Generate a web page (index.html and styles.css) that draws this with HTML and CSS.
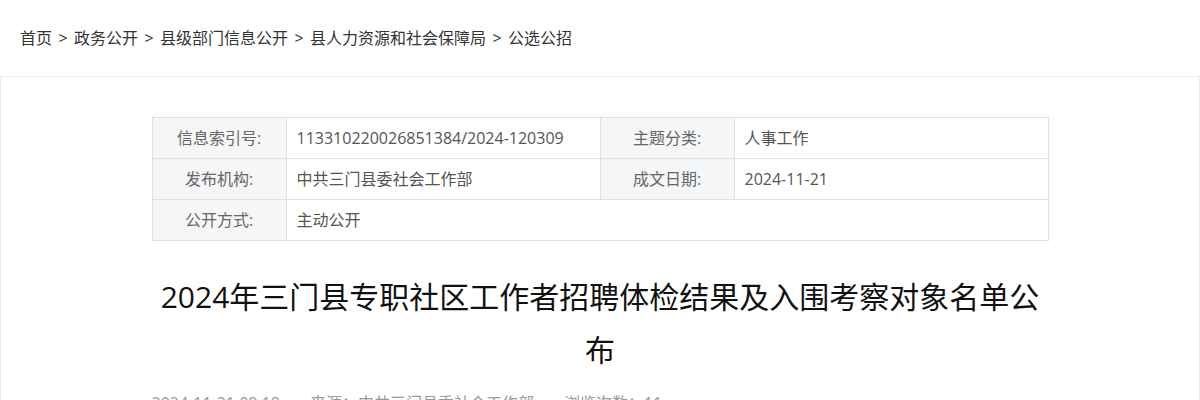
FILE: index.html
```html
<!DOCTYPE html>
<html lang="zh-CN">
<head>
<meta charset="utf-8">
<title>2024年三门县专职社区工作者招聘体检结果及入围考察对象名单公布</title>
<link rel="stylesheet" href="styles.css">
</head>
<body>
<div class="crumbs">
  <a href="#">首页</a><span class="sep">&gt;</span><a href="#">政务公开</a><span class="sep">&gt;</span><a href="#">县级部门信息公开</a><span class="sep">&gt;</span><a href="#">县人力资源和社会保障局</a><span class="sep">&gt;</span><a href="#">公选公招</a>
</div>
<div class="main">
  <table class="meta-table">
    <colgroup>
      <col class="c-label"><col class="c-value"><col class="c-label"><col class="c-value">
    </colgroup>
    <tr>
      <th>信息索引号:</th><td>113310220026851384/2024-120309</td>
      <th>主题分类:</th><td>人事工作</td>
    </tr>
    <tr>
      <th>发布机构:</th><td>中共三门县委社会工作部</td>
      <th>成文日期:</th><td>2024-11-21</td>
    </tr>
    <tr>
      <th>公开方式:</th><td colspan="3">主动公开</td>
    </tr>
  </table>
  <h1 class="title">2024年三门县专职社区工作者招聘体检结果及入围考察对象名单公布</h1>
  <div class="info">
    <span>2024-11-21 09:18</span><span>来源：中共三门县委社会工作部</span><span>浏览次数：11</span>
  </div>
</div>
</body>
</html>
```
FILE: styles.css
```css
html, body {
  margin: 0;
  padding: 0;
  background: #fff;
}
body {
  font-family: "Open Sans", "Noto Sans CJK SC", sans-serif;
  color: #333;
}
.crumbs {
  height: 76px;
  box-sizing: border-box;
  padding: 26px 20px;
  font-size: 16px;
  line-height: 24px;
  color: #333;
}
.crumbs a {
  color: #333;
  text-decoration: none;
}
.crumbs .sep {
  display: inline-block;
  width: 22px;
  text-align: center;
  color: #333;
}
.main {
  border: 1px solid #eeeeee;
  border-bottom: none;
  padding-top: 40px;
  min-height: 400px;
}
.meta-table {
  width: 897px;
  margin: 0 auto;
  border-collapse: collapse;
  table-layout: fixed;
  font-size: 16px;
}
.c-label { width: 134px; }
.c-value { width: 314px; }
.meta-table th,
.meta-table td {
  border: 1px solid #e0e0e0;
  height: 40px;
  padding: 0;
  line-height: 40px;
  font-weight: normal;
  white-space: nowrap;
}
.meta-table th {
  background: #f5f6f7;
  color: #666;
  text-align: center;
}
.meta-table td {
  color: #555;
  text-align: left;
  padding-left: 10px;
}
.title {
  width: 897px;
  margin: 29px auto 0;
  font-size: 30px;
  line-height: 53px;
  font-weight: normal;
  color: #111;
  text-align: center;
}
.info {
  width: 897px;
  margin: 15px auto 0;
  font-size: 16px;
  line-height: 24px;
  color: #999;
  display: flex;
  gap: 30px;
}
```
